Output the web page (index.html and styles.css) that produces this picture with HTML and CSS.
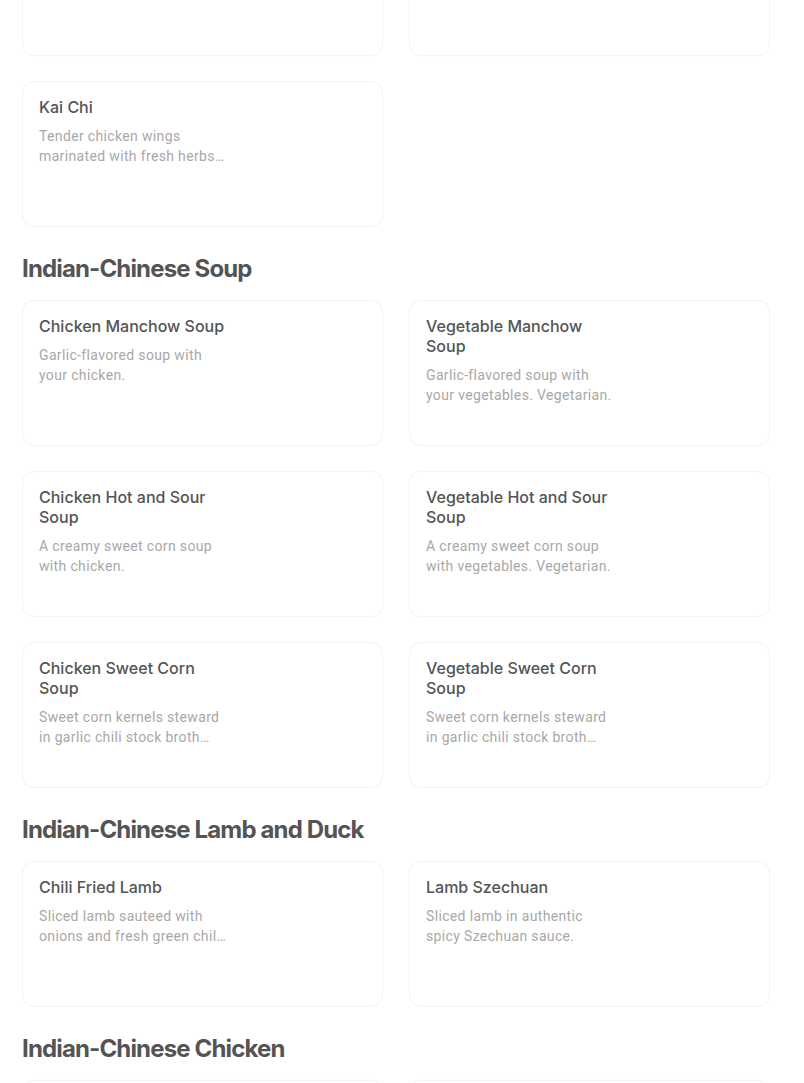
FILE: index.html
```html
<!DOCTYPE html>
<html lang="en">
<head>
<meta charset="utf-8">
<title>Menu</title>
<link rel="stylesheet" href="styles.css">
</head>
<body>
<main class="menu">
  <section class="section section-first">
    <div class="grid">
      <article class="card"><div class="info"><h3 class="title">&nbsp;</h3></div></article>
      <article class="card"><div class="info"><h3 class="title">&nbsp;</h3></div></article>
      <article class="card">
        <div class="info">
          <h3 class="title">Kai Chi</h3>
          <p class="desc">Tender chicken wings marinated with fresh herbs…</p>
        </div>
      </article>
    </div>
  </section>

  <section class="section">
    <h2 class="heading">Indian-Chinese Soup</h2>
    <div class="grid">
      <article class="card">
        <div class="info">
          <h3 class="title">Chicken Manchow Soup</h3>
          <p class="desc">Garlic-flavored soup with your chicken.</p>
        </div>
      </article>
      <article class="card">
        <div class="info">
          <h3 class="title">Vegetable Manchow Soup</h3>
          <p class="desc">Garlic-flavored soup with your vegetables. Vegetarian.</p>
        </div>
      </article>
      <article class="card">
        <div class="info">
          <h3 class="title">Chicken Hot and Sour Soup</h3>
          <p class="desc">A creamy sweet corn soup with chicken.</p>
        </div>
      </article>
      <article class="card">
        <div class="info">
          <h3 class="title">Vegetable Hot and Sour Soup</h3>
          <p class="desc">A creamy sweet corn soup with vegetables. Vegetarian.</p>
        </div>
      </article>
      <article class="card">
        <div class="info">
          <h3 class="title">Chicken Sweet Corn Soup</h3>
          <p class="desc">Sweet corn kernels steward in garlic chili stock broth…</p>
        </div>
      </article>
      <article class="card">
        <div class="info">
          <h3 class="title">Vegetable Sweet Corn Soup</h3>
          <p class="desc">Sweet corn kernels steward in garlic chili stock broth…</p>
        </div>
      </article>
    </div>
  </section>

  <section class="section">
    <h2 class="heading">Indian-Chinese Lamb and Duck</h2>
    <div class="grid">
      <article class="card">
        <div class="info">
          <h3 class="title">Chili Fried Lamb</h3>
          <p class="desc">Sliced lamb sauteed with onions and fresh green chil…</p>
        </div>
      </article>
      <article class="card">
        <div class="info">
          <h3 class="title">Lamb Szechuan</h3>
          <p class="desc">Sliced lamb in authentic spicy Szechuan sauce.</p>
        </div>
      </article>
    </div>
  </section>

  <section class="section">
    <h2 class="heading">Indian-Chinese Chicken</h2>
    <div class="grid">
      <article class="card"><div class="info"><h3 class="title">&nbsp;</h3></div></article>
      <article class="card"><div class="info"><h3 class="title">&nbsp;</h3></div></article>
    </div>
  </section>
</main>
</body>
</html>
```

FILE: styles.css
```css
html, body {
  margin: 0;
  padding: 0;
  background: #ffffff;
  overflow: hidden;
}

body {
  font-family: Inter, "Noto Sans", "Liberation Sans", sans-serif;
  color: #545454;
}

.menu {
  width: 748px;
  margin-left: 22px;
}

.section-first {
  margin-top: -90px;
}

.heading {
  margin: 26px 0 15px;
  font-size: 24px;
  line-height: 32px;
  font-weight: 700;
  letter-spacing: -0.85px;
  color: #545454;
}

.grid {
  display: grid;
  grid-template-columns: 1fr 1fr;
  column-gap: 26px;
  row-gap: 25px;
}

.card {
  box-sizing: border-box;
  height: 146px;
  border: 1px solid #f3f3f3;
  border-radius: 12px;
  box-shadow: 0 0 2px rgba(0, 0, 0, 0.02);
  padding: 15px 16px 16px;
  display: flex;
  background: #fff;
}

.info {
  width: 190px;
}

.title {
  margin: 0;
  font-size: 16px;
  line-height: 20px;
  font-weight: 500;
  color: #545454;
}

.desc {
  width: 188px;
  margin: 9px 0 0;
  font-family: Roboto, Inter, "Liberation Sans", sans-serif;
  font-size: 14px;
  line-height: 20px;
  font-weight: 400;
  letter-spacing: 0.35px;
  color: #a8a8a8;
}
```
